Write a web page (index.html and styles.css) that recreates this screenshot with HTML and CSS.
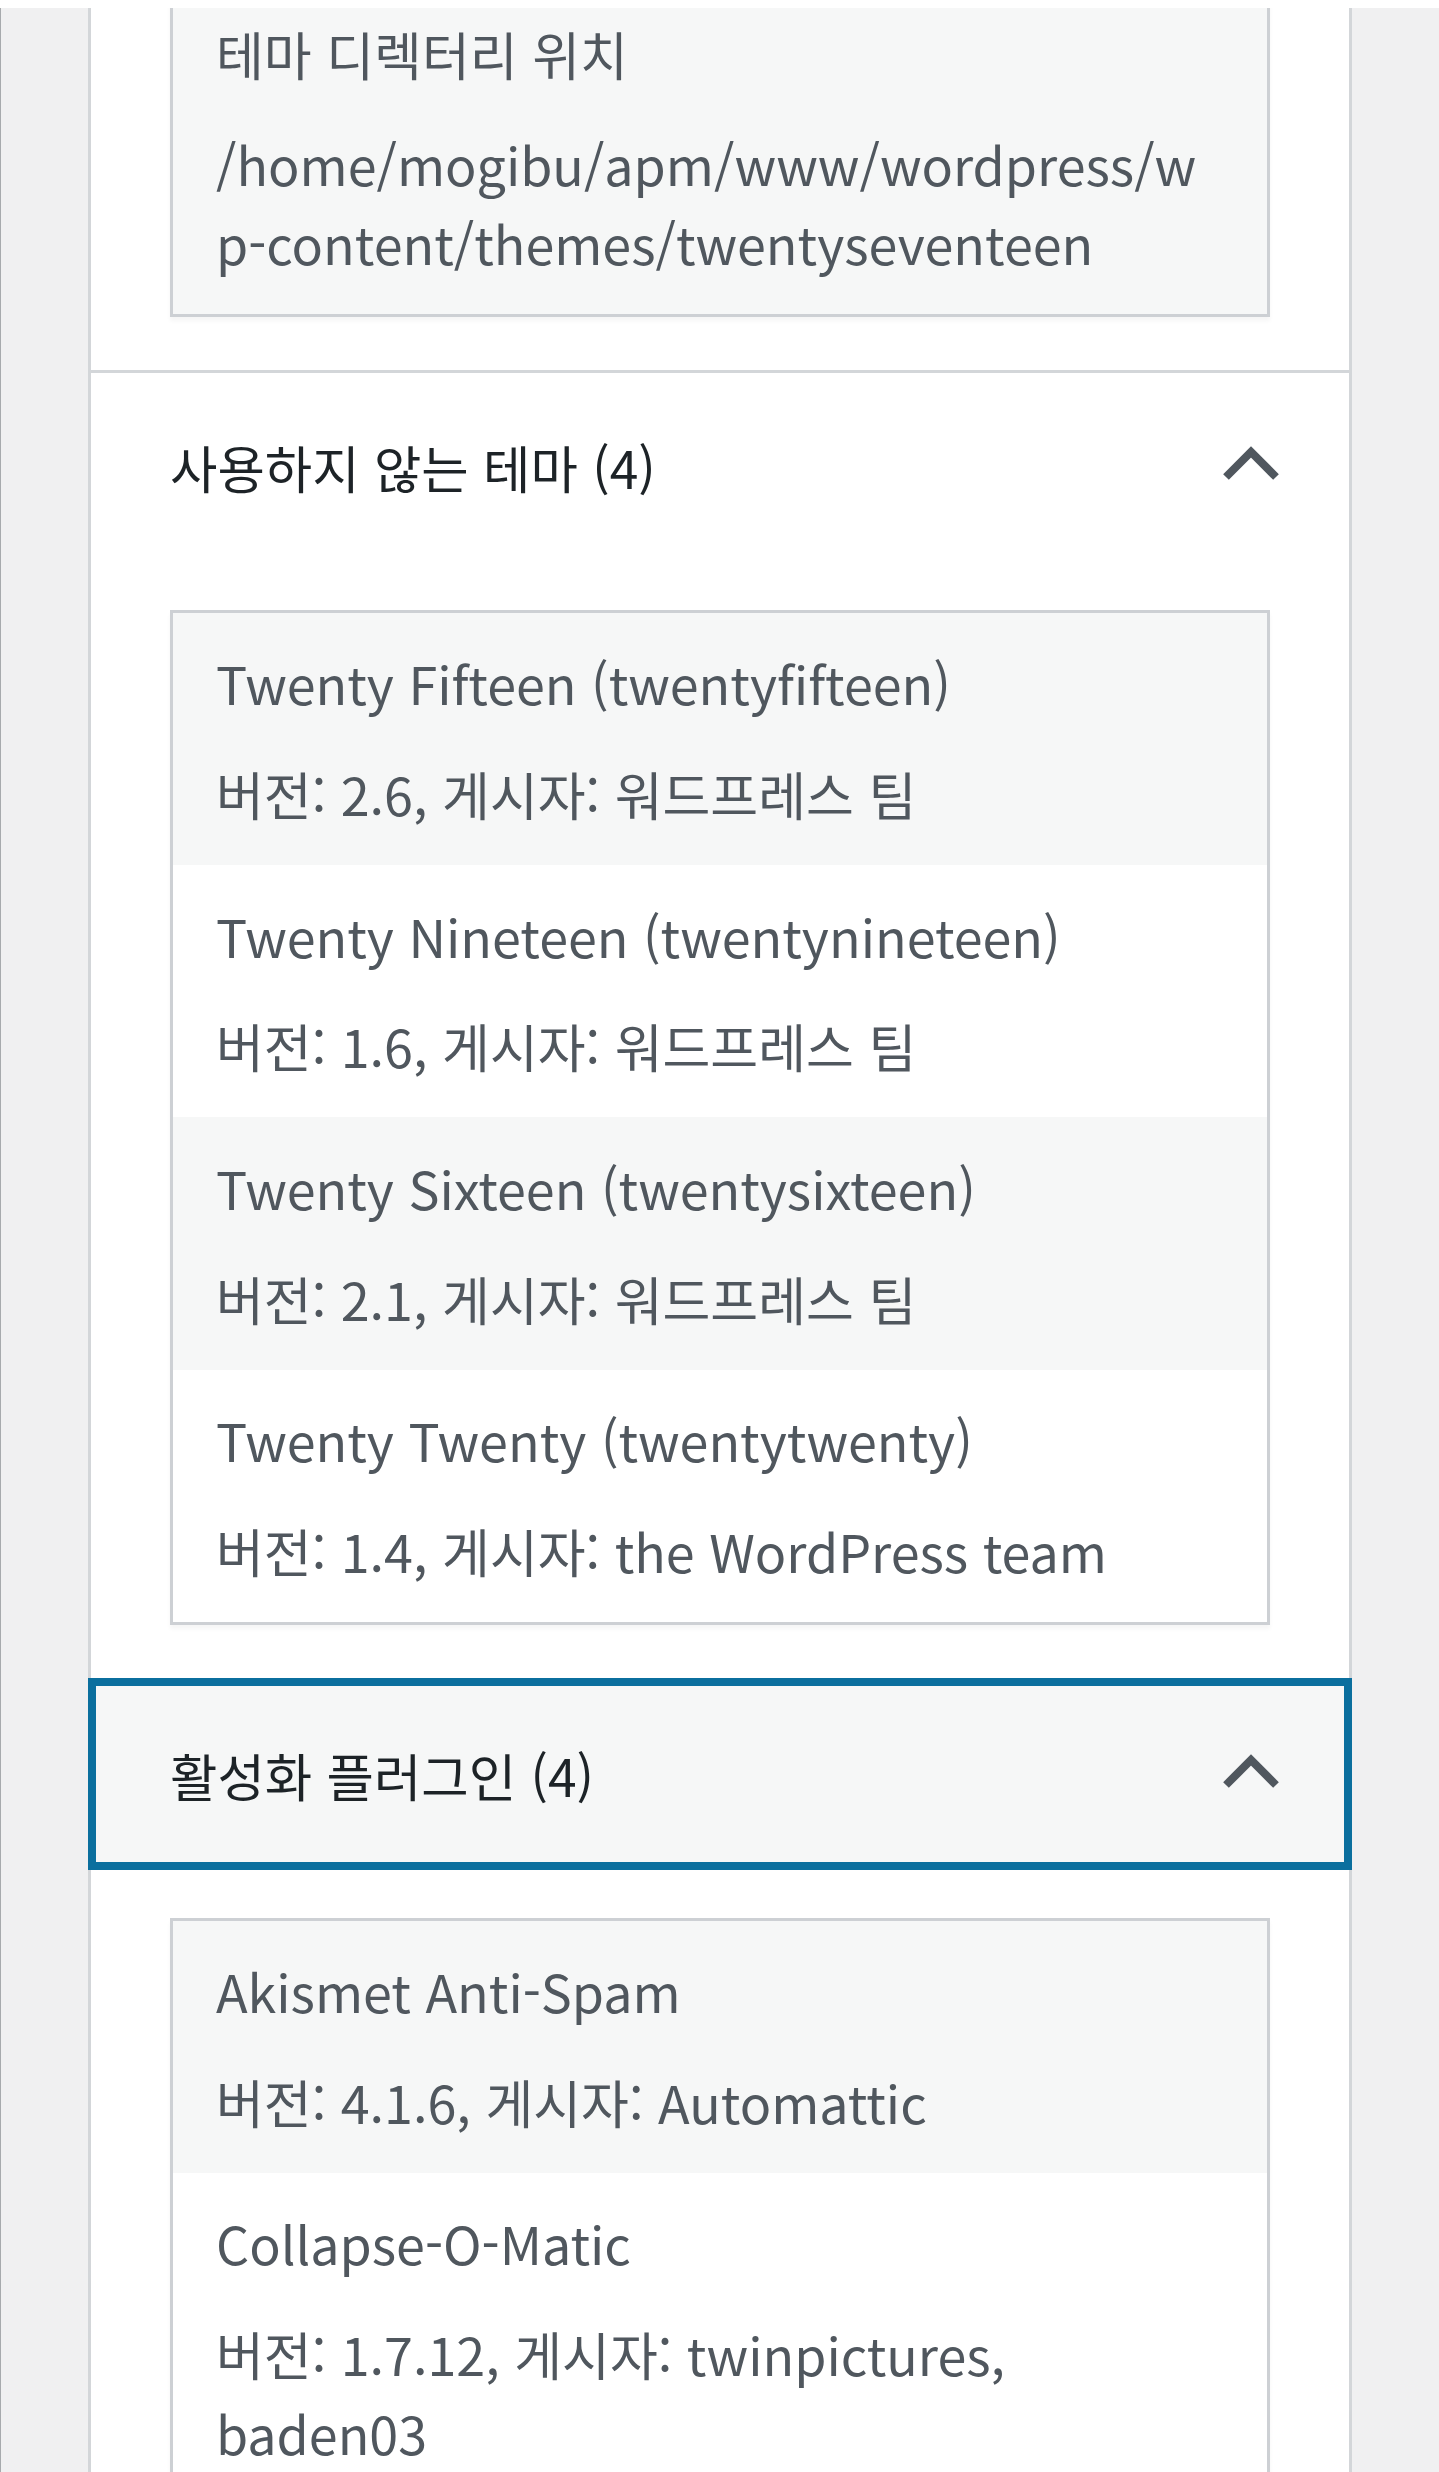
FILE: index.html
```html
<!DOCTYPE html>
<html lang="ko">
<head>
    <meta charset="UTF-8">
    <meta name="viewport" content="width=device-width, initial-scale=1.0">
    <title>사이트 건강 정보</title>
    <link rel="stylesheet" href="styles.css">
</head>
<body>
    <div class="topbar"></div>

    <div class="accordion">
        <div class="panel-body">
            <div class="info-box">
                <div class="info-row">
                    <div class="cell">테마 디렉터리 위치</div>
                    <div class="cell">/home/mogibu/apm/www/wordpress/wp-content/themes/twentyseventeen</div>
                </div>
            </div>
        </div>

        <h3 class="trigger">
            <span>사용하지 않는 테마 (4)</span>
            <svg class="chevron" width="56" height="34" viewBox="0 0 56 34"><polyline points="3,31 28,6 53,31"/></svg>
        </h3>
        <div class="panel-body">
            <div class="info-box">
                <div class="info-row">
                    <div class="cell">Twenty Fifteen (twentyfifteen)</div>
                    <div class="cell">버전: 2.6, 게시자: 워드프레스 팀</div>
                </div>
                <div class="info-row">
                    <div class="cell">Twenty Nineteen (twentynineteen)</div>
                    <div class="cell">버전: 1.6, 게시자: 워드프레스 팀</div>
                </div>
                <div class="info-row">
                    <div class="cell">Twenty Sixteen (twentysixteen)</div>
                    <div class="cell">버전: 2.1, 게시자: 워드프레스 팀</div>
                </div>
                <div class="info-row">
                    <div class="cell">Twenty Twenty (twentytwenty)</div>
                    <div class="cell">버전: 1.4, 게시자: the WordPress team</div>
                </div>
            </div>
        </div>

        <h3 class="trigger is-focused">
            <span>활성화 플러그인 (4)</span>
            <svg class="chevron" width="56" height="34" viewBox="0 0 56 34"><polyline points="3,31 28,6 53,31"/></svg>
        </h3>
        <div class="panel-body">
            <div class="info-box">
                <div class="info-row">
                    <div class="cell">Akismet Anti-Spam</div>
                    <div class="cell">버전: 4.1.6, 게시자: Automattic</div>
                </div>
                <div class="info-row">
                    <div class="cell">Collapse-O-Matic</div>
                    <div class="cell">버전: 1.7.12, 게시자: twinpictures, baden03</div>
                </div>
            </div>
        </div>
    </div>
</body>
</html>
```
FILE: styles.css
```css
body {
    margin: 0;
    background: #f0f0f1;
    border-left: 1px solid #a7aaad;
    font-family: "Noto Sans CJK KR", sans-serif;
    font-size: 52px;
    line-height: 78.75px;
    color: #50575e;
}

.topbar {
    position: fixed;
    top: 0;
    left: 0;
    right: 0;
    height: 8px;
    background: #fff;
    z-index: 10;
}

.accordion {
    box-sizing: border-box;
    width: 1264px;
    margin: -68px 0 0 87px;
    background: #fff;
    border-left: 3px solid #d3d6d9;
    border-right: 3px solid #d3d6d9;
}

.panel-body {
    padding: 48px 79px 53px 79px;
}

.trigger {
    display: flex;
    justify-content: space-between;
    align-items: center;
    margin: 0;
    padding: 55px 70px 55px 79px;
    border-top: 3px solid #d3d6d9;
    font-size: 51.5px;
    font-weight: 400;
    line-height: 78.75px;
    color: #1d2327;
}

.trigger.is-focused {
    margin: 0 -3px;
    padding-left: 82px;
    padding-right: 73px;
    background: #f6f7f7;
    outline: 8px solid #0b6f9e;
    outline-offset: -8px;
}

.chevron {
    display: block;
    margin-bottom: 8px;
}

.chevron polyline {
    fill: none;
    stroke: #50575e;
    stroke-width: 8;
    stroke-linecap: butt;
    stroke-linejoin: miter;
}

.info-box {
    border: 3px solid #cdd0d4;
    box-shadow: 0 4px 4px rgba(0, 0, 0, 0.04);
    background: #fff;
}

.info-row {
    padding: 15.5px 0 15.25px;
}

.info-row:nth-child(odd) {
    background: #f6f7f7;
}

.cell {
    padding: 16px 69px 16px 43px;
    overflow-wrap: anywhere;
}
```
